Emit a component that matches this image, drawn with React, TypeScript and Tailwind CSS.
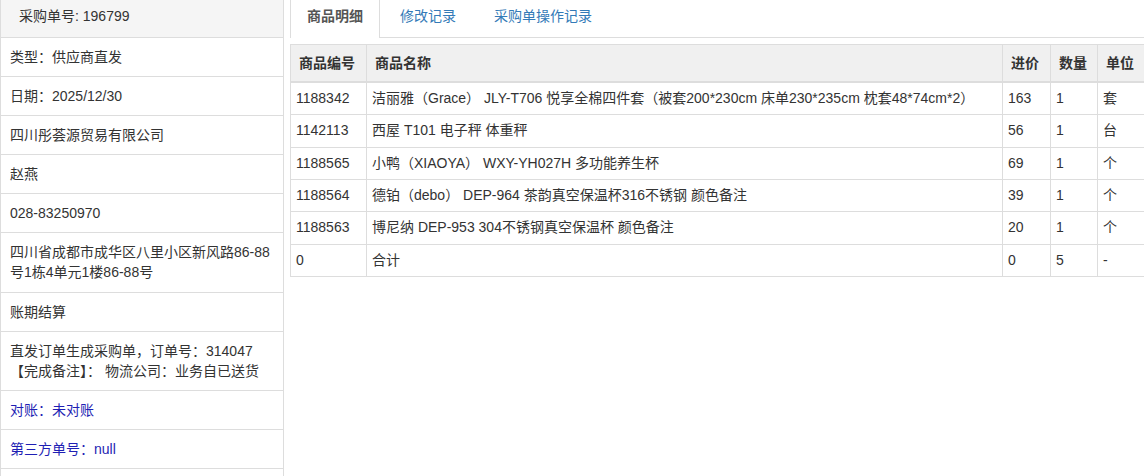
// Purchase order detail — info sidebar + goods tab table
const FONT = { fontFamily: '"Liberation Sans", "Noto Sans CJK SC", sans-serif' };

const info: { text: React.ReactNode; blue?: boolean; tall?: boolean }[] = [
  { text: "类型：供应商直发" },
  { text: "日期：2025/12/30" },
  { text: "四川彤荟源贸易有限公司" },
  { text: "赵燕" },
  { text: "028-83250970" },
  { text: "四川省成都市成华区八里小区新风路86-88号1栋4单元1楼86-88号", tall: true },
  { text: "账期结算" },
  {
    text: (
      <>
        直发订单生成采购单，订单号：314047
        <br />
        【完成备注】： 物流公司：业务自已送货
      </>
    ),
  },
  { text: "对账：未对账", blue: true },
  { text: "第三方单号：null", blue: true },
  { text: "\u00a0" },
];

const rows = [
  ["1188342", "洁丽雅（Grace） JLY-T706 悦享全棉四件套（被套200*230cm 床单230*235cm 枕套48*74cm*2）", "163", "1", "套"],
  ["1142113", "西屋 T101 电子秤 体重秤", "56", "1", "台"],
  ["1188565", "小鸭（XIAOYA） WXY-YH027H 多功能养生杯", "69", "1", "个"],
  ["1188564", "德铂（debo） DEP-964 茶韵真空保温杯316不锈钢 颜色备注", "39", "1", "个"],
  ["1188563", "博尼纳 DEP-953 304不锈钢真空保温杯 颜色备注", "20", "1", "个"],
  ["0", "合计", "0", "5", "-"],
];

const tabs = ["商品明细", "修改记录", "采购单操作记录"];

export default function App() {
  return (
    <div className="w-[1144px] h-[476px] overflow-hidden bg-white text-[14px] text-[#333]" style={FONT}>
      <div className="flex gap-[6px] w-[1170px]">
        {/* ── Sidebar ── */}
        <div className="w-[284px] shrink-0 border-x border-[#ddd] h-[476px]">
          <div className="h-[38px] bg-[#f5f5f5] border-b border-[#ddd] pl-[18px] leading-[20px] pt-[6px]">
            采购单号: 196799
          </div>
          {info.map((item, i) => (
            <div
              key={i}
              className={`border-b border-[#ddd] px-[9px] pt-[9px] leading-[20px] ${item.tall ? "pb-[10px]" : "pb-[9px]"} ${item.blue ? "text-[#1f1fb4]" : ""}`}
            >
              {item.text}
            </div>
          ))}
        </div>

        {/* ── Main ── */}
        <div className="flex-1">
          <div className="flex border-b border-[#ddd] h-[38px]">
            {tabs.map((t, i) => (
              <div
                key={t}
                className={
                  i === 0
                    ? "mr-[2px] px-[16px] pt-[6px] h-[38px] leading-[20px] border-x border-[#ddd] bg-white font-bold text-[#555]"
                    : "mr-[2px] px-[17px] pt-[6px] leading-[20px] border-x border-transparent text-[#337ab7]"
                }
              >
                {t}
              </div>
            ))}
          </div>

          <table className="mt-[6px] w-[855px] border-collapse table-fixed">
            <colgroup>
              <col className="w-[76px]" />
              <col className="w-[636px]" />
              <col className="w-[48px]" />
              <col className="w-[47px]" />
              <col className="w-[48px]" />
            </colgroup>
            <thead>
              <tr className="bg-[#f0f0f0]">
                {["商品编号", "商品名称", "进价", "数量", "单位"].map((h) => (
                  <th
                    key={h}
                    className="border border-[#ddd] border-b-2 px-[8px] py-[8px] leading-[20px] text-left font-bold whitespace-nowrap"
                  >
                    {h}
                  </th>
                ))}
              </tr>
            </thead>
            <tbody>
              {rows.map((r) => (
                <tr key={r[0] + r[1]}>
                  {r.map((c, j) => (
                    <td
                      key={j}
                      className="border border-[#ddd] px-[5px] py-[5px] leading-[21.33px] whitespace-nowrap"
                    >
                      {c}
                    </td>
                  ))}
                </tr>
              ))}
            </tbody>
          </table>
        </div>
      </div>
    </div>
  );
}
